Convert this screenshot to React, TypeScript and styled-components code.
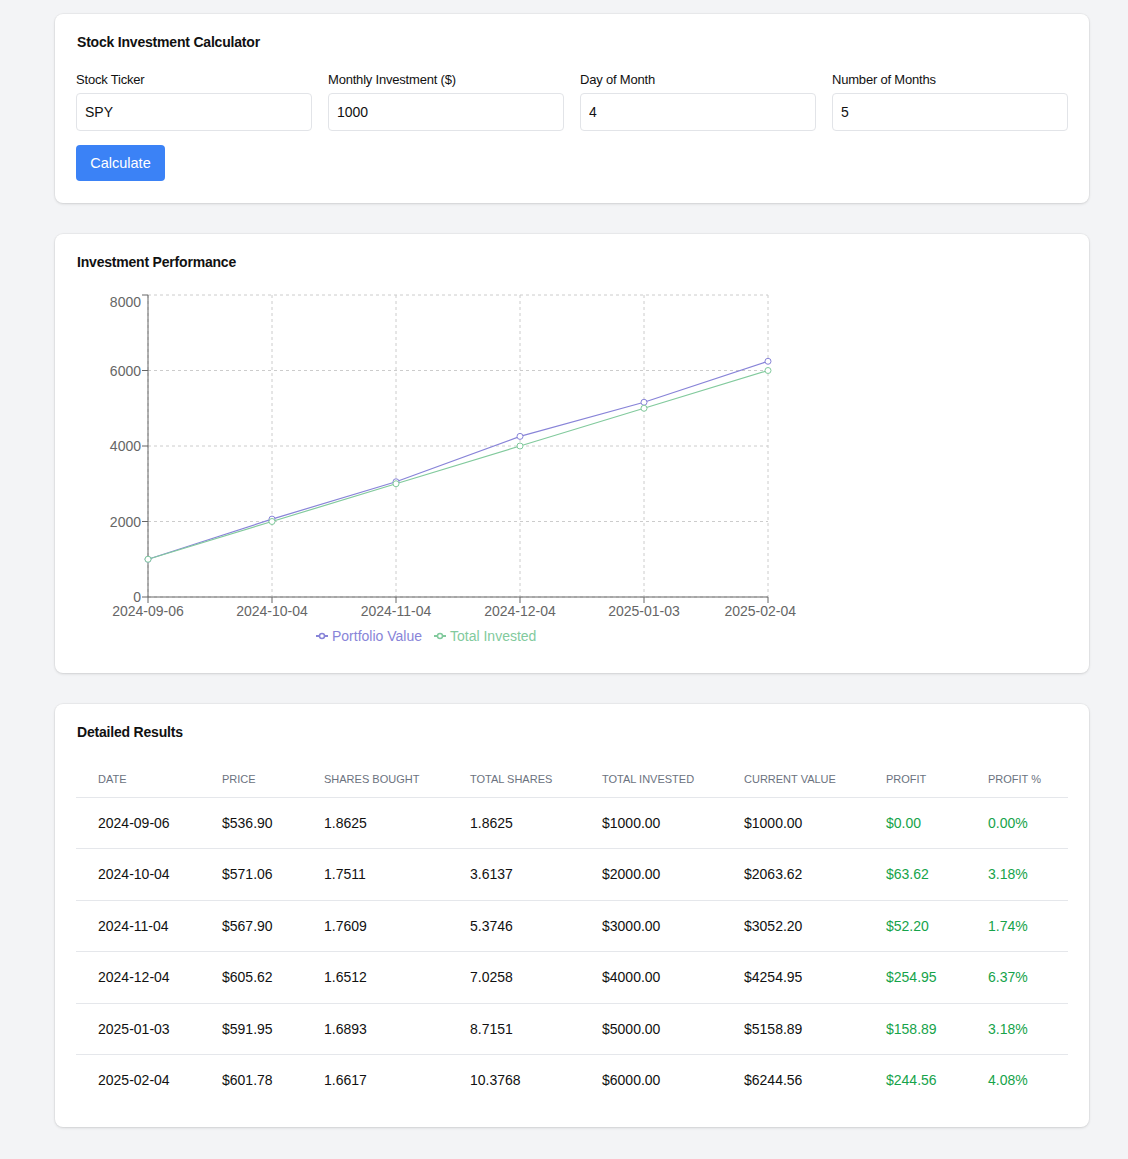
import React from 'react';
import styled, { createGlobalStyle } from 'styled-components';

const GlobalStyle = createGlobalStyle`
  body {
    margin: 0;
    background: #f3f4f6;
    font-family: "Liberation Sans", Arial, sans-serif;
    color: #111;
  }
`;

const Page = styled.div`
  padding: 14px 39px 30px 55px;
  display: flex;
  flex-direction: column;
  gap: 31px;
`;

const Card = styled.section<{ $pb?: number }>`
  background: #fff;
  border-radius: 8px;
  box-shadow: 0 1px 3px rgba(0, 0, 0, 0.12), 0 0 0 1px rgba(0, 0, 0, 0.03);
  padding: 20px 21px ${(p) => p.$pb ?? 21}px;
`;

const Heading = styled.h2<{ $gap: number }>`
  margin: 0 0 ${(p) => p.$gap}px 1px;
  font-size: 14px;
  letter-spacing: -0.2px;
  line-height: 16px;
  font-weight: 700;
`;

const FieldGrid = styled.div`
  display: grid;
  grid-template-columns: repeat(4, 1fr);
  gap: 16px;
`;

const Field = styled.label`
  display: flex;
  flex-direction: column;
  gap: 4px;
`;

const FieldLabel = styled.span`
  font-size: 13px;
  letter-spacing: -0.2px;
  line-height: 18px;
`;

const Input = styled.input`
  box-sizing: border-box;
  height: 38px;
  padding: 0 8px;
  border: 1px solid #e2e4e8;
  border-radius: 4px;
  font-family: "Liberation Sans", Arial, sans-serif;
  font-size: 14px;
  color: #111;
  outline: none;
`;

const Button = styled.button`
  margin-top: 14px;
  width: 89px;
  height: 36px;
  border: none;
  border-radius: 4px;
  background: #3b82f6;
  color: #fff;
  font-family: "Liberation Sans", Arial, sans-serif;
  font-size: 14.5px;
  cursor: pointer;
`;

const ChartBox = styled.div`
  margin-top: 13px;
  width: 800px;
`;

const Table = styled.table`
  width: 100%;
  border-collapse: collapse;
  table-layout: fixed;
`;

const Th = styled.th`
  padding: 15px 22px 10px;
  text-align: left;
  font-size: 11px;
  line-height: 16px;
  font-weight: 400;
  text-transform: uppercase;
  color: #6b7280;
  border-bottom: 1px solid #e5e7eb;
`;

const Row = styled.tr`
  border-bottom: 1px solid #e5e7eb;
  &:last-child {
    border-bottom: none;
  }
`;

const Td = styled.td<{ $profit?: boolean }>`
  padding: 15px 22px;
  font-size: 14px;
  line-height: 20.4px;
  color: ${(p) => (p.$profit ? '#16a34a' : '#111')};
  white-space: nowrap;
`;

const fields = [
  { label: 'Stock Ticker', value: 'SPY' },
  { label: 'Monthly Investment ($)', value: '1000' },
  { label: 'Day of Month', value: '4' },
  { label: 'Number of Months', value: '5' },
];

const rows = [
  ['2024-09-06', '$536.90', '1.8625', '1.8625', '$1000.00', '$1000.00', '$0.00', '0.00%'],
  ['2024-10-04', '$571.06', '1.7511', '3.6137', '$2000.00', '$2063.62', '$63.62', '3.18%'],
  ['2024-11-04', '$567.90', '1.7609', '5.3746', '$3000.00', '$3052.20', '$52.20', '1.74%'],
  ['2024-12-04', '$605.62', '1.6512', '7.0258', '$4000.00', '$4254.95', '$254.95', '6.37%'],
  ['2025-01-03', '$591.95', '1.6893', '8.7151', '$5000.00', '$5158.89', '$158.89', '3.18%'],
  ['2025-02-04', '$601.78', '1.6617', '10.3768', '$6000.00', '$6244.56', '$244.56', '4.08%'],
];

const columns = [
  { title: 'Date', width: 124 },
  { title: 'Price', width: 102 },
  { title: 'Shares Bought', width: 146 },
  { title: 'Total Shares', width: 132 },
  { title: 'Total Invested', width: 142 },
  { title: 'Current Value', width: 142 },
  { title: 'Profit', width: 102 },
  { title: 'Profit %', width: 102 },
];

const PURPLE = '#8884d8';
const GREEN = '#82ca9d';
const X0 = 72;
const STEP = 124;
const TOP = 12;
const BOTTOM = 314;
const yOf = (v: number) => BOTTOM - (v / 8000) * (BOTTOM - TOP);

const Chart = () => {
  const portfolio = rows.map((r) => parseFloat(r[5].slice(1)));
  const invested = rows.map((r) => parseFloat(r[4].slice(1)));
  const xs = rows.map((_, i) => X0 + i * STEP);
  const right = xs[xs.length - 1];
  const line = (vals: number[]) => vals.map((v, i) => `${i ? 'L' : 'M'}${xs[i]},${yOf(v)}`).join(' ');
  const yTicks = [0, 2000, 4000, 6000, 8000];
  const last = rows.length - 1;

  return (
    <svg width="800" height="365" viewBox="0 0 800 365" fontFamily='"Liberation Sans", Arial, sans-serif' fontSize="14">
      <g stroke="#ccc" strokeDasharray="3 3">
        {yTicks.map((t) => (
          <line key={t} x1={X0} x2={right} y1={yOf(t)} y2={yOf(t)} />
        ))}
        {xs.map((x) => (
          <line key={x} x1={x} x2={x} y1={TOP} y2={BOTTOM} />
        ))}
      </g>
      <g stroke="#666">
        <line x1={X0} x2={X0} y1={TOP} y2={BOTTOM} />
        <line x1={X0} x2={right} y1={BOTTOM} y2={BOTTOM} />
        {yTicks.map((t) => (
          <line key={t} x1={X0 - 6} x2={X0} y1={yOf(t)} y2={yOf(t)} />
        ))}
        {xs.map((x) => (
          <line key={x} x1={x} x2={x} y1={BOTTOM} y2={BOTTOM + 6} />
        ))}
      </g>
      <g fill="#666">
        {yTicks.map((t) => (
          <text key={t} x={X0 - 7} y={yOf(t) + (t === 8000 ? 12 : 5)} textAnchor="end">
            {t}
          </text>
        ))}
        {rows.map((r, i) => (
          <text
            key={r[0]}
            x={i === last ? 720 : xs[i]}
            y={BOTTOM + 19}
            textAnchor={i === last ? 'end' : 'middle'}
          >
            {r[0]}
          </text>
        ))}
      </g>
      <path d={line(portfolio)} fill="none" stroke={PURPLE} strokeWidth="1.2" />
      <path d={line(invested)} fill="none" stroke={GREEN} strokeWidth="1.2" />
      {portfolio.map((v, i) => (
        <circle key={i} cx={xs[i]} cy={yOf(v)} r="3" fill="#fff" stroke={PURPLE} />
      ))}
      {invested.map((v, i) => (
        <circle key={i} cx={xs[i]} cy={yOf(v)} r="3" fill="#fff" stroke={GREEN} />
      ))}
      <g transform="translate(240,353)">
        <line x1="0" x2="12" y1="0" y2="0" stroke={PURPLE} strokeWidth="2" />
        <circle cx="6" cy="0" r="2.5" fill="#fff" stroke={PURPLE} strokeWidth="1.5" />
        <text x="16" y="5" fill={PURPLE}>Portfolio Value</text>
        <line x1="118" x2="130" y1="0" y2="0" stroke={GREEN} strokeWidth="2" />
        <circle cx="124" cy="0" r="2.5" fill="#fff" stroke={GREEN} strokeWidth="1.5" />
        <text x="134" y="5" fill={GREEN}>Total Invested</text>
      </g>
    </svg>
  );
};

export default function App() {
  return (
    <>
      <GlobalStyle />
      <Page>
        <Card $pb={22}>
          <Heading $gap={21}>Stock Investment Calculator</Heading>
          <FieldGrid>
            {fields.map((f) => (
              <Field key={f.label}>
                <FieldLabel>{f.label}</FieldLabel>
                <Input defaultValue={f.value} />
              </Field>
            ))}
          </FieldGrid>
          <Button>Calculate</Button>
        </Card>

        <Card>
          <Heading $gap={0}>Investment Performance</Heading>
          <ChartBox>
            <Chart />
          </ChartBox>
        </Card>

        <Card $pb={22}>
          <Heading $gap={16}>Detailed Results</Heading>
          <Table>
            <colgroup>
              {columns.map((c) => (
                <col key={c.title} style={{ width: c.width }} />
              ))}
            </colgroup>
            <thead>
              <tr>
                {columns.map((c) => (
                  <Th key={c.title}>{c.title}</Th>
                ))}
              </tr>
            </thead>
            <tbody>
              {rows.map((r) => (
                <Row key={r[0]}>
                  {r.map((cell, i) => (
                    <Td key={i} $profit={i >= 6}>
                      {cell}
                    </Td>
                  ))}
                </Row>
              ))}
            </tbody>
          </Table>
        </Card>
      </Page>
    </>
  );
}
